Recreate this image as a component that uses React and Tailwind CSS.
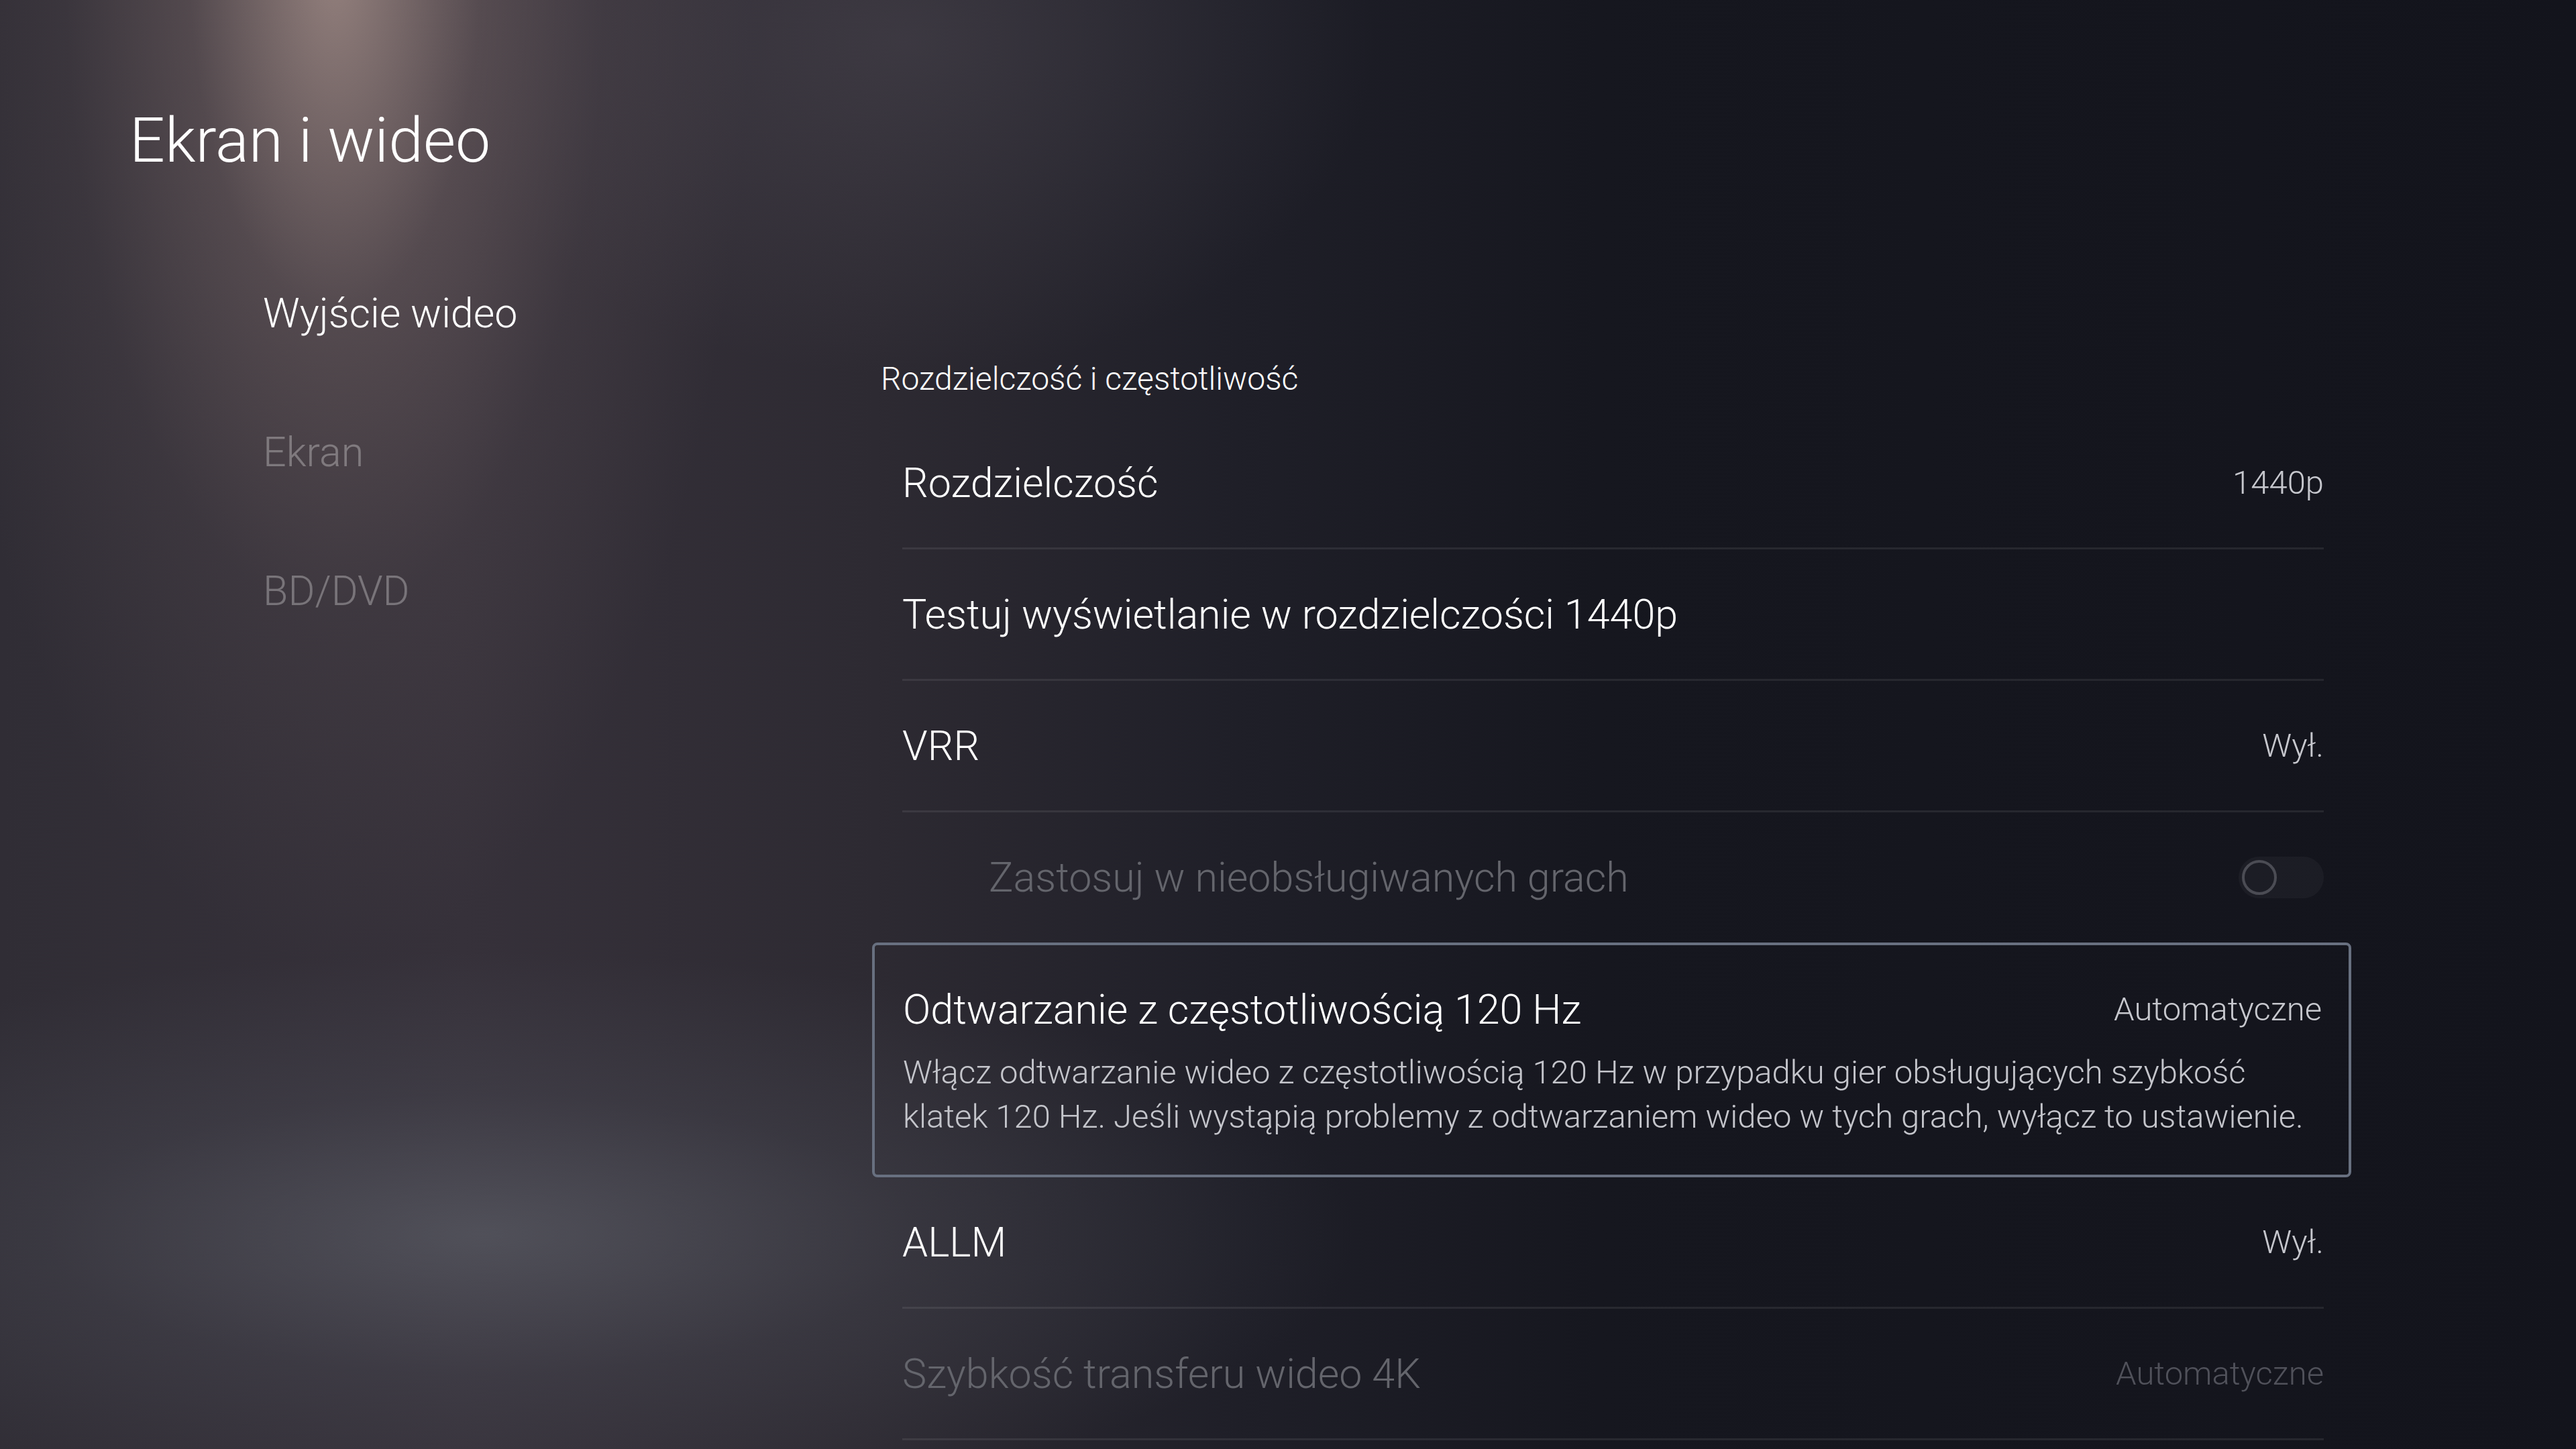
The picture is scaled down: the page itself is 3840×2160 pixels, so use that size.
import React from "react";

function Row({ label, value, dim, indent, toggle, last }) {
  return (
    <div
      className={
        "ml-[45px] w-[2119px] flex items-center justify-between " +
        (last ? "h-[194px]" : "h-[196px] border-b-[3px] border-white/[0.08]")
      }
    >
      <span
        className={
          "text-[61px] leading-[60px] " +
          (indent ? "pl-[129px] " : "") +
          (dim ? "text-[#64656c]" : "text-white")
        }
      >
        {label}
      </span>
      {value && (
        <span className={"text-[49px] leading-[48px] " + (dim ? "text-[#50515a]" : "text-[#c6c7cd]")}>
          {value}
        </span>
      )}
      {toggle && (
        <div className="w-[127px] h-[62px] rounded-full bg-white/[0.035] flex items-center pl-[5px]">
          <div className="w-[52px] h-[52px] rounded-full border-[4px] border-[#4b4c54]" />
        </div>
      )}
    </div>
  );
}

export default function App() {
  return (
    <div
      className="w-[3840px] h-[2160px] overflow-hidden font-[family-name:Roboto,sans-serif] font-light flex flex-col bg-[radial-gradient(ellipse_620px_1500px_at_500px_-60px,rgba(185,160,152,0.72),rgba(140,120,118,0.36)_35%,rgba(110,96,98,0.16)_65%,transparent_100%),radial-gradient(ellipse_1300px_420px_at_720px_1840px,rgba(98,101,110,0.6),rgba(80,82,92,0.3)_50%,transparent_100%),radial-gradient(ellipse_700px_500px_at_1350px_60px,rgba(90,85,95,0.35),transparent_100%),linear-gradient(to_right,#302d35_0%,#36313a_18%,#2d2a32_34%,#1f1f28_48%,#16171f_62%,#13141c_100%)]"
    >
      <div className="pl-[193px] pt-[164px] h-[256px]">
        <h1 className="text-[93px] leading-[92px] text-white font-light">Ekran i wideo</h1>
      </div>

      <div className="flex mt-[181px]">
        <nav className="w-[1300px] pl-[392px] flex flex-col gap-[147px]">
          <div className="text-[61px] leading-[60px] text-white">Wyjście wideo</div>
          <div className="text-[61px] leading-[60px] text-white/30">Ekran</div>
          <div className="text-[61px] leading-[60px] text-white/30">BD/DVD</div>
        </nav>

        <div className="flex flex-col pt-[104px]">
          <div className="ml-[13px] text-[48px] leading-[48px] text-white mb-[34px]">
            Rozdzielczość i częstotliwość
          </div>
          <Row label="Rozdzielczość" value="1440p" />
          <Row label="Testuj wyświetlanie w rozdzielczości 1440p" />
          <Row label="VRR" value="Wył." />
          <Row label="Zastosuj w nieobsługiwanych grach" dim indent toggle last />

          <div className="w-[2205px] h-[350px] border-[4px] border-[#687080] rounded-[8px] pl-[42px] pr-[40px] pt-[56px]">
            <div className="flex items-center justify-between h-[80px]">
              <span className="text-[61px] leading-[80px] text-white">Odtwarzanie z częstotliwością 120 Hz</span>
              <span className="text-[49px] leading-[48px] text-[#c6c7cd]">Automatyczne</span>
            </div>
            <p className="mt-[21px] text-[49px] leading-[66px] text-[#c4c5cb] whitespace-nowrap">
              Włącz odtwarzanie wideo z częstotliwością 120 Hz w przypadku gier obsługujących szybkość
              <br />
              klatek 120 Hz. Jeśli wystąpią problemy z odtwarzaniem wideo w tych grach, wyłącz to ustawienie.
            </p>
          </div>

          <Row label="ALLM" value="Wył." />
          <Row label="Szybkość transferu wideo 4K" value="Automatyczne" dim />
        </div>
      </div>
    </div>
  );
}
